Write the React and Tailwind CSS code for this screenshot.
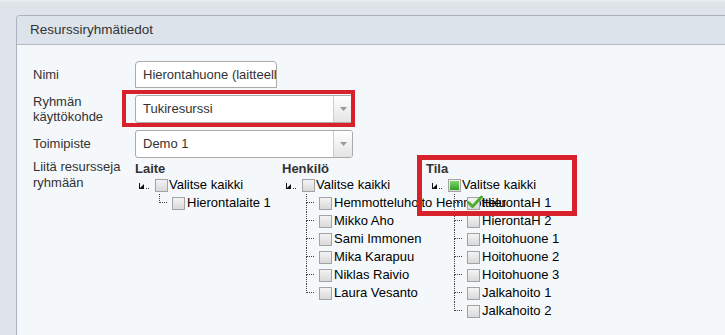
import React from "react";

const Checkbox = ({ state }) => (
  <span className="relative flex items-center justify-center w-[13px] h-[13px] shrink-0 border border-[#a3a3a3] bg-gradient-to-b from-[#f4f4f4] to-[#d9d9d9]">
    {state === "partial" && (
      <span className="w-[9px] h-[9px] bg-gradient-to-b from-[#7fd66a] to-[#2f9e24]" />
    )}
    {state === "checked" && (
      <svg
        className="absolute left-[-1px] top-[-3px]"
        width="16"
        height="14"
        viewBox="0 0 16 14"
      >
        <path
          d="M1.5 7.5 L5.5 11.5 L14.5 2"
          fill="none"
          stroke="#4cae2c"
          strokeWidth="3"
          strokeLinecap="round"
          strokeLinejoin="round"
        />
      </svg>
    )}
  </span>
);

const OpenIcon = () => (
  <svg width="12" height="10" viewBox="0 0 12 10" className="shrink-0">
    <path d="M1 9 L6 9 L6 4 Z" fill="#111" />
    <rect x="1" y="3" width="1" height="6" fill="#111" />
    <rect x="8" y="8" width="1" height="1" fill="#333" />
    <rect x="10" y="8" width="1" height="1" fill="#333" />
  </svg>
);

const TreeColumn = ({ title, items, width, rootState, offset, childOffset }) => (
  <div className={`${width} shrink-0`}>
    <div className="h-[14px] leading-[14px] font-bold text-[#333]">{title}</div>
    <div className={offset}>
      <div className="flex items-center h-[18px]">
        <span className="w-[20px] flex justify-end pr-[5px]">
          <OpenIcon />
        </span>
        <Checkbox state={rootState} />
        <span className="ml-[1px] whitespace-nowrap text-black">Valitse kaikki</span>
      </div>
      <div className={childOffset}>
        {items.map((item, i) => (
          <div key={item.label} className="flex items-center h-[18px]">
            <span className="relative w-[13px] self-stretch shrink-0">
              <span className="absolute left-0 top-0 w-[8px] h-1/2 border-l border-b border-dotted border-[#444]" />
              {i < items.length - 1 && (
                <span className="absolute left-0 top-1/2 h-1/2 border-l border-dotted border-[#444]" />
              )}
            </span>
            <Checkbox state={item.checked ? "checked" : null} />
            <span className="ml-[2px] whitespace-nowrap text-black">{item.label}</span>
          </div>
        ))}
      </div>
    </div>
  </div>
);

const Select = ({ value }) => (
  <div className="flex w-[218px] h-[28px] border border-[#aaa] rounded-[3px] bg-white overflow-hidden">
    <div className="flex-1 flex items-center pl-[7px] text-[#333]">{value}</div>
    <div className="w-[19px] flex items-center justify-center border-l border-[#ccc] bg-gradient-to-b from-white to-[#e4e4e4]">
      <svg width="7" height="4" viewBox="0 0 7 4">
        <path d="M0 0 L7 0 L3.5 4 Z" fill="#999" />
      </svg>
    </div>
  </div>
);

export default function App() {
  const laite = [{ label: "Hierontalaite 1" }];
  const henkilo = [
    { label: "Hemmotteluhoito Hemmottelu" },
    { label: "Mikko Aho" },
    { label: "Sami Immonen" },
    { label: "Mika Karapuu" },
    { label: "Niklas Raivio" },
    { label: "Laura Vesanto" },
  ];
  const tila = [
    { label: "HierontaH 1", checked: true },
    { label: "HierontaH 2" },
    { label: "Hoitohuone 1" },
    { label: "Hoitohuone 2" },
    { label: "Hoitohuone 3" },
    { label: "Jalkahoito 1" },
    { label: "Jalkahoito 2" },
  ];

  return (
    <div
      className="relative w-full h-[335px] overflow-hidden bg-[#dfe4ea] border-t-2 border-[#e9ecef] pt-[13px] pl-[16px] text-[13px] text-[#333]"
      style={{ fontFamily: '"Liberation Sans", Arial, sans-serif' }}
    >
      <div className="h-[321px] border-l border-t border-[#aab3bd] rounded-tl-[4px] bg-[#f4f8fb]">
        <div className="h-[29px] flex items-center pl-[13px] bg-[#dce3ea] border-b border-[#b3bac2] rounded-tl-[4px] text-[13.5px]">
          Resurssiryhmätiedot
        </div>
        <div className="grid grid-cols-[102px_1fr] pl-[16px] pt-[16px] gap-y-[6px] items-center">
          <div>Nimi</div>
          <div>
            <input
              readOnly
              value="Hierontahuone (laitteellinen hieronta)"
              className="w-[142px] h-[27px] border border-[#aaa] rounded-t-[4px] bg-white pl-[7px] text-[13px] text-[#333] outline-none"
              style={{ fontFamily: '"Liberation Sans", Arial, sans-serif' }}
            />
          </div>

          <div className="leading-[15px]">
            Ryhmän
            <br />
            käyttökohde
          </div>
          <Select value="Tukiresurssi" />

          <div>Toimipiste</div>
          <Select value="Demo 1" />

          <div className="self-start leading-[16px] mt-[-5px]">
            Liitä resursseja
            <br />
            ryhmään
          </div>
          <div className="flex self-start mt-[-2px]">
            <TreeColumn title="Laite" items={laite} width="w-[147px]" rootState={null} offset="" childOffset="ml-[24px]" />
            <TreeColumn title="Henkilö" items={henkilo} width="w-[144px]" rootState={null} offset="" childOffset="ml-[24px]" />
            <TreeColumn title="Tila" items={tila} width="w-[150px]" rootState="partial" offset="ml-[2px]" childOffset="ml-[26px]" />
          </div>
        </div>
      </div>

      <div className="absolute left-[122px] top-[88px] w-[233px] h-[37px] border-[4px] border-[#d8222b] pointer-events-none" />
      <div className="absolute left-[417px] top-[153px] w-[160px] h-[61px] border-[5px] border-[#d8222b] pointer-events-none" />
    </div>
  );
}
